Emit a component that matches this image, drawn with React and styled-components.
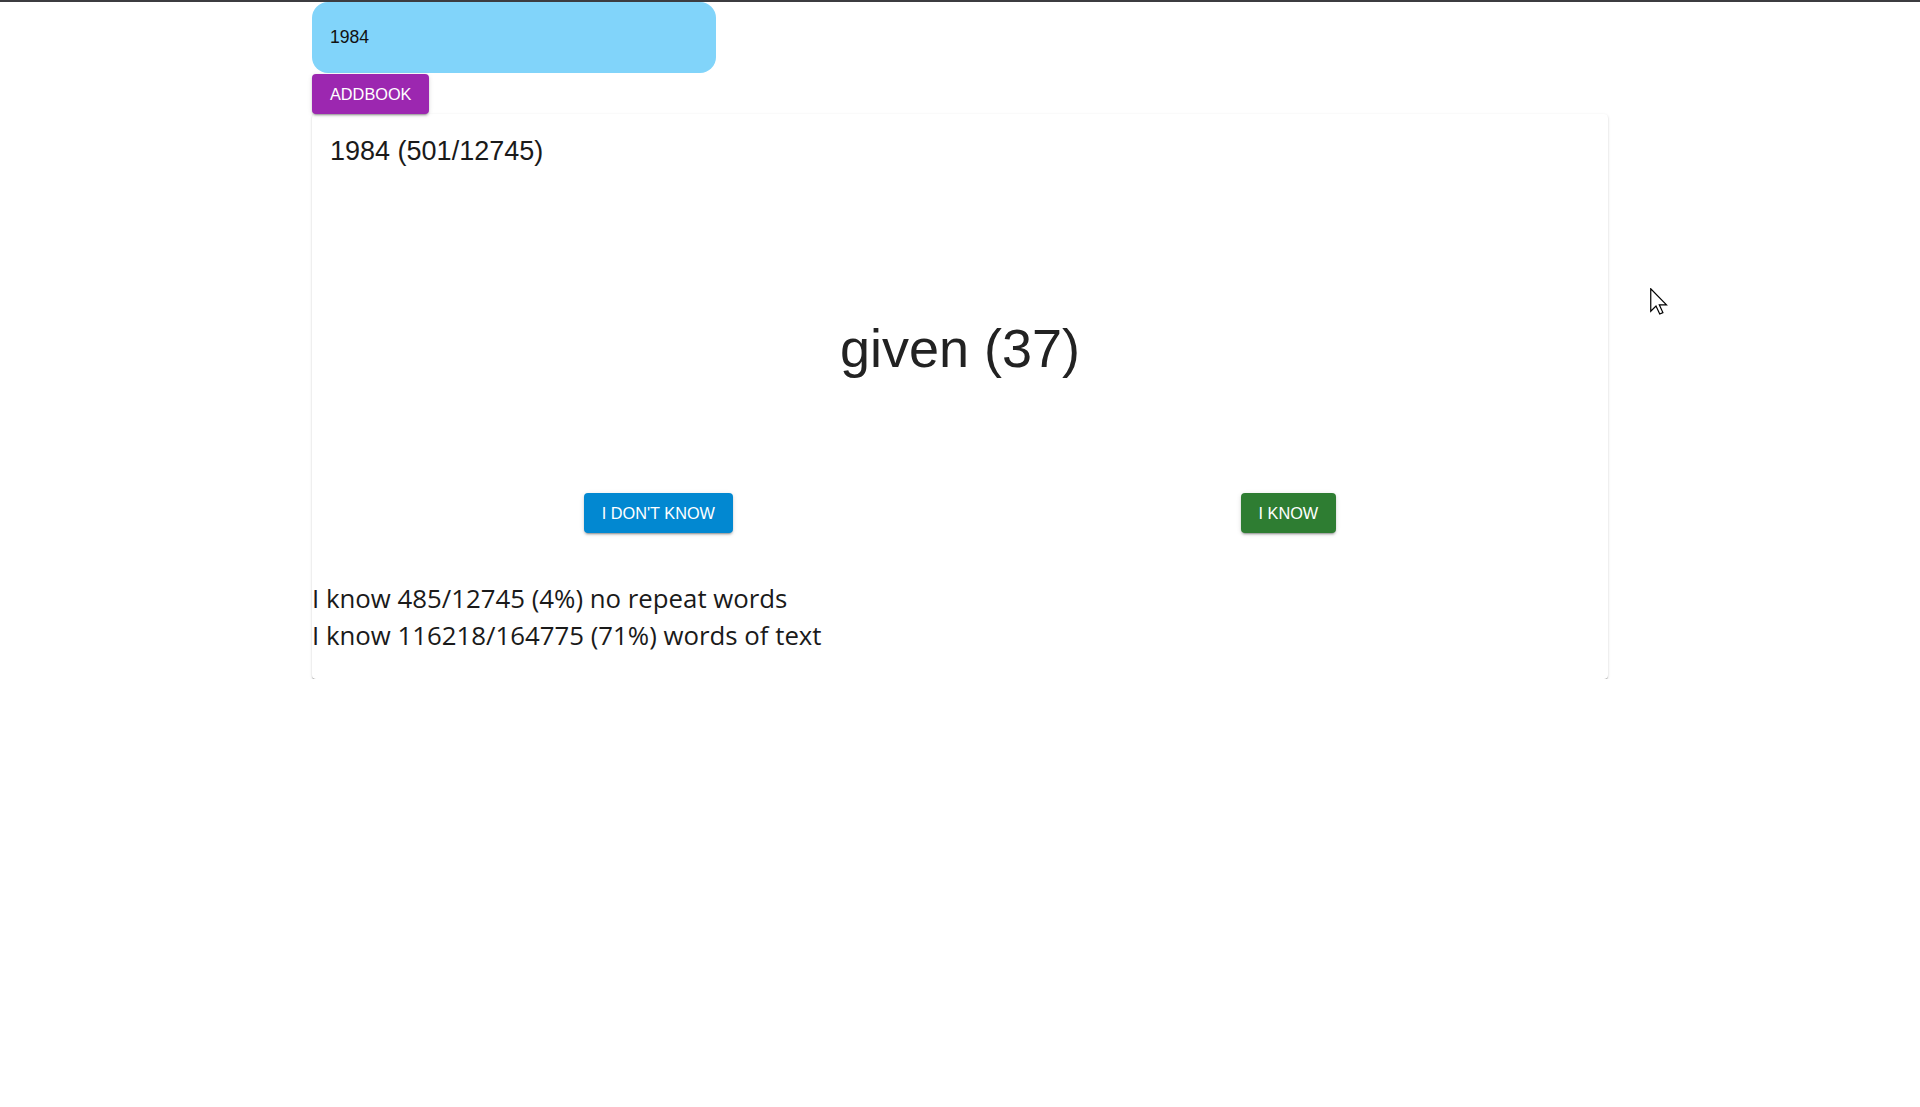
import React, { useState } from 'react';
import styled, { createGlobalStyle } from 'styled-components';

const GlobalStyle = createGlobalStyle`
  body {
    margin: 0;
    background: #fff;
    font-family: 'Liberation Sans', Arial, sans-serif;
    color: rgba(0, 0, 0, 0.87);
  }
`;

const book = {
  title: '1984',
  position: 501,
  unique: 12745,
  word: 'given',
  count: 37,
  knowUnique: 485,
  knowTotal: 116218,
  total: 164775,
};

function App() {
  const [name, setName] = useState(book.title);

  const uniquePct = Math.round((book.knowUnique / book.unique) * 100);
  const totalPct = Math.round((book.knowTotal / book.total) * 100);

  return (
    <>
      <GlobalStyle />
      <TopBar />
      <Page>
        <SearchField value={name} onChange={e => setName(e.target.value)} />
        <Button $bg="#9c27b0">AddBook</Button>

        <Card>
          <Title>{book.title} ({book.position}/{book.unique})</Title>
          <Word>{book.word} ({book.count})</Word>
          <Actions>
            <Button $bg="#0288d1">I don't know</Button>
            <Button $bg="#2e7d32">I know</Button>
          </Actions>
          <Stats>
            <div>I know {book.knowUnique}/{book.unique} ({uniquePct}%) no repeat words</div>
            <div>I know {book.knowTotal}/{book.total} ({totalPct}%) words of text</div>
          </Stats>
        </Card>
      </Page>

      <Cursor width="18" height="27" viewBox="0 0 12 18">
        <path d="M0.5 0.5 L0.5 15.5 L4 12 L6.5 17.3 L8.6 16.4 L6.2 11.2 L11 11.2 Z"
          fill="#fff" stroke="#000" strokeWidth="0.8" strokeLinejoin="miter" />
      </Cursor>
    </>
  );
}

export default App;


// styles
const TopBar = styled.div`
  height: 2px;
  background: #3c3c40;
`

const Page = styled.div`
  width: 1296px;
  margin: 0 auto;
`

const SearchField = styled.input`
  display: block;
  box-sizing: border-box;
  width: 404px;
  height: 71px;
  padding: 0 18px;
  border: none;
  outline: none;
  border-radius: 16px;
  background: #81d4fa;
  font-family: 'Liberation Sans', Arial, sans-serif;
  font-size: 17.6px;
  color: #111;
`

const Button = styled.button`
  height: 40px;
  padding: 0 18px;
  margin-top: ${p => (p.$bg === '#9c27b0' ? '1px' : '0')};
  border: none;
  border-radius: 4px;
  background: ${p => p.$bg};
  color: #fff;
  font-family: 'Liberation Sans', Arial, sans-serif;
  font-size: 16.3px;
  text-transform: uppercase;
  box-shadow: 0px 3px 1px -2px rgba(0,0,0,0.2), 0px 2px 2px 0px rgba(0,0,0,0.14), 0px 1px 5px 0px rgba(0,0,0,0.12);
  cursor: pointer;
`

const Card = styled.div`
  box-sizing: border-box;
  height: 565px;
  border-radius: 4px;
  background: #fff;
  box-shadow: 0px 2px 1px -1px rgba(0,0,0,0.25), 0px 1px 1px 0px rgba(0,0,0,0.18), 0px 1px 3px 0px rgba(0,0,0,0.14);
`

const Title = styled.div`
  padding: 22px 18px 0;
  font-size: 27px;
  line-height: 31px;
  color: #1a1a1a;
`

const Word = styled.div`
  padding: 151px 0 114px;
  text-align: center;
  font-size: 54px;
  line-height: 61px;
  color: #222;
`

const Actions = styled.div`
  display: flex;
  justify-content: space-around;
  padding: 0 18px;
`

const Stats = styled.div`
  margin-top: 47px;
  font-family: 'Open Sans', 'Noto Sans', sans-serif;
  font-size: 25.8px;
  line-height: 37px;
  color: #1a1a1a;
`

const Cursor = styled.svg`
  position: absolute;
  left: 1650px;
  top: 288px;
`
